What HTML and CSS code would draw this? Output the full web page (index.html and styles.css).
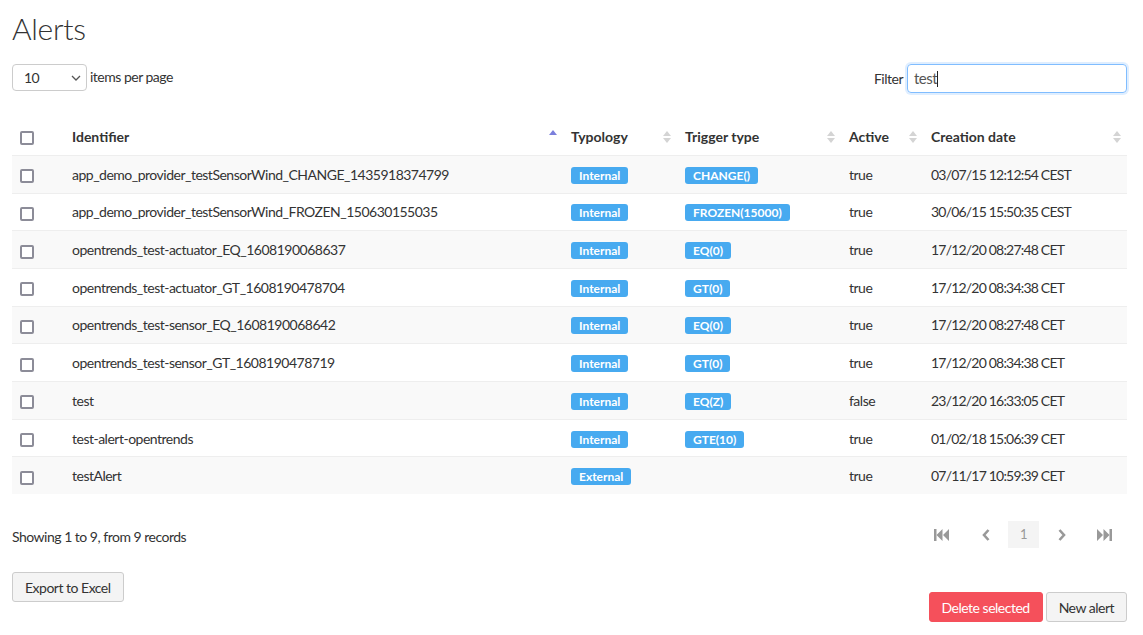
FILE: index.html
```html
<!DOCTYPE html>
<html lang="en">
<head>
    <meta charset="UTF-8">
    <meta name="viewport" content="width=device-width, initial-scale=1.0">
    <title>Alerts</title>
    <link rel="stylesheet" href="styles.css">
</head>
<body>
    <div class="container">
        <h1>Alerts</h1>

        <div class="toolbar">
            <div class="page-size">
                <div class="select">
                    <span>10</span>
                    <svg class="chevron" width="10" height="6" viewBox="0 0 10 6"><path d="M1 1l4 4 4-4" fill="none" stroke="#555" stroke-width="1.3"/></svg>
                </div>
                <label>items per page</label>
            </div>
            <div class="filter">
                <label for="filter">Filter</label>
                <div class="filter-input">test<span class="caret"></span></div>
            </div>
        </div>

        <table class="grid">
            <colgroup>
                <col style="width:52px">
                <col style="width:499px">
                <col style="width:114px">
                <col style="width:164px">
                <col style="width:82px">
                <col>
            </colgroup>
            <thead>
                <tr>
                    <th><input type="checkbox"></th>
                    <th class="sortable sort-asc">Identifier<span class="sort"></span></th>
                    <th class="sortable">Typology<span class="sort"></span></th>
                    <th class="sortable">Trigger type<span class="sort"></span></th>
                    <th class="sortable">Active<span class="sort"></span></th>
                    <th class="sortable">Creation date<span class="sort"></span></th>
                </tr>
            </thead>
            <tbody>
                <tr>
                    <td><input type="checkbox"></td>
                    <td>app_demo_provider_testSensorWind_CHANGE_1435918374799</td>
                    <td><span class="badge">Internal</span></td>
                    <td><span class="badge">CHANGE()</span></td>
                    <td>true</td>
                    <td class="date">03/07/15 12:12:54 CEST</td>
                </tr>
                <tr>
                    <td><input type="checkbox"></td>
                    <td>app_demo_provider_testSensorWind_FROZEN_150630155035</td>
                    <td><span class="badge">Internal</span></td>
                    <td><span class="badge">FROZEN(15000)</span></td>
                    <td>true</td>
                    <td class="date">30/06/15 15:50:35 CEST</td>
                </tr>
                <tr>
                    <td><input type="checkbox"></td>
                    <td>opentrends_test-actuator_EQ_1608190068637</td>
                    <td><span class="badge">Internal</span></td>
                    <td><span class="badge">EQ(0)</span></td>
                    <td>true</td>
                    <td class="date">17/12/20 08:27:48 CET</td>
                </tr>
                <tr>
                    <td><input type="checkbox"></td>
                    <td>opentrends_test-actuator_GT_1608190478704</td>
                    <td><span class="badge">Internal</span></td>
                    <td><span class="badge">GT(0)</span></td>
                    <td>true</td>
                    <td class="date">17/12/20 08:34:38 CET</td>
                </tr>
                <tr>
                    <td><input type="checkbox"></td>
                    <td>opentrends_test-sensor_EQ_1608190068642</td>
                    <td><span class="badge">Internal</span></td>
                    <td><span class="badge">EQ(0)</span></td>
                    <td>true</td>
                    <td class="date">17/12/20 08:27:48 CET</td>
                </tr>
                <tr>
                    <td><input type="checkbox"></td>
                    <td>opentrends_test-sensor_GT_1608190478719</td>
                    <td><span class="badge">Internal</span></td>
                    <td><span class="badge">GT(0)</span></td>
                    <td>true</td>
                    <td class="date">17/12/20 08:34:38 CET</td>
                </tr>
                <tr>
                    <td><input type="checkbox"></td>
                    <td>test</td>
                    <td><span class="badge">Internal</span></td>
                    <td><span class="badge">EQ(Z)</span></td>
                    <td>false</td>
                    <td class="date">23/12/20 16:33:05 CET</td>
                </tr>
                <tr>
                    <td><input type="checkbox"></td>
                    <td>test-alert-opentrends</td>
                    <td><span class="badge">Internal</span></td>
                    <td><span class="badge">GTE(10)</span></td>
                    <td>true</td>
                    <td class="date">01/02/18 15:06:39 CET</td>
                </tr>
                <tr>
                    <td><input type="checkbox"></td>
                    <td>testAlert</td>
                    <td><span class="badge">External</span></td>
                    <td></td>
                    <td>true</td>
                    <td class="date">07/11/17 10:59:39 CET</td>
                </tr>
            </tbody>
        </table>

        <div class="footer">
            <span class="summary">Showing 1 to 9, from 9 records</span>
            <ul class="pager">
                <li class="first"><svg width="15" height="12" viewBox="0 0 15 12"><rect x="0" y="0" width="2.5" height="12" fill="#999"/><path d="M8.5 0v12L2.5 6z M15 0v12L9 6z" fill="#999"/></svg></li>
                <li><svg width="8" height="12" viewBox="0 0 8 12"><path d="M6.5 1L2 6l4.5 5" fill="none" stroke="#999" stroke-width="2.6"/></svg></li>
                <li class="current">1</li>
                <li><svg width="8" height="12" viewBox="0 0 8 12"><path d="M1.5 1L6 6l-4.5 5" fill="none" stroke="#999" stroke-width="2.6"/></svg></li>
                <li class="last"><svg width="15" height="12" viewBox="0 0 15 12"><path d="M0 0v12L6 6z M6.5 0v12L12.5 6z" fill="#999"/><rect x="12.5" y="0" width="2.5" height="12" fill="#999"/></svg></li>
            </ul>
        </div>

        <div class="actions">
            <button class="btn">Export to Excel</button>
            <div class="actions-right">
                <button class="btn btn-danger">Delete selected</button>
                <button class="btn">New alert</button>
            </div>
        </div>
    </div>
</body>
</html>
```

FILE: styles.css
```css
:root {
    --text-color: #333;
    --border-color: #ccc;
    --stripe-color: #f9f9f9;
    --badge-color: #47aaf0;
    --danger-color: #f5505b;
}

* {
    margin: 0;
    padding: 0;
    box-sizing: border-box;
}

body {
    font-family: 'Lato', 'Noto Sans', sans-serif;
    font-size: 14px;
    line-height: 1.5;
    letter-spacing: -0.5px;
    color: var(--text-color);
    background: #fff;
}

.container {
    padding: 9px 16px 0 12px;
}

h1 {
    font-size: 30px;
    font-weight: 300;
    line-height: 38px;
    letter-spacing: -0.3px;
    margin-bottom: 17px;
}

.toolbar {
    display: flex;
    justify-content: space-between;
    align-items: flex-start;
    margin-bottom: 25px;
}

.page-size {
    display: flex;
    align-items: center;
    gap: 3px;
}

.page-size label {
    margin-top: -2px;
}

.select {
    width: 75px;
    height: 27px;
    border: 1px solid var(--border-color);
    border-radius: 4px;
    display: flex;
    align-items: center;
    justify-content: space-between;
    padding: 0 5px 0 11px;
}

.filter {
    display: flex;
    align-items: center;
    gap: 4px;
}

.filter-input {
    width: 220px;
    height: 29px;
    border: 1px solid #80bdff;
    border-radius: 4px;
    box-shadow: 0 0 0 2px rgba(128, 189, 255, 0.25);
    padding: 2px 6px;
    font-size: 15px;
    color: #555;
}

.caret {
    display: inline-block;
    width: 1px;
    height: 16px;
    background: #222;
    vertical-align: -3px;
}

.grid {
    width: 100%;
    border-collapse: collapse;
    table-layout: fixed;
}

.grid th,
.grid td {
    padding: 7.85px 8px;
    text-align: left;
    vertical-align: middle;
    white-space: nowrap;
}

.grid th {
    font-weight: 700;
    letter-spacing: 0;
    position: relative;
    padding-top: 8px;
}

.grid td {
    border-top: 1px solid #eee;
}

.grid td.date {
    letter-spacing: -0.8px;
}

.grid tbody tr:nth-child(odd) {
    background: var(--stripe-color);
}

input[type="checkbox"] {
    appearance: none;
    width: 14px;
    height: 14px;
    margin: 0;
    border: 2px solid #8c8c98;
    border-radius: 2px;
    background: #fff;
    vertical-align: middle;
}

.sort {
    position: absolute;
    right: 5px;
    top: 50%;
    width: 9px;
    height: 12px;
    margin-top: -5px;
}

.sort::before,
.sort::after {
    content: "";
    position: absolute;
    left: 0;
    border-left: 4.5px solid transparent;
    border-right: 4.5px solid transparent;
}

.sort::before {
    top: 0;
    border-bottom: 5px solid #d4d4d4;
}

.sort::after {
    bottom: 0;
    border-top: 5px solid #d4d4d4;
}

.sort-asc .sort {
    margin-top: -6px;
}

.sort-asc .sort::before {
    border-bottom-color: #7b7fdc;
}

.sort-asc .sort::after {
    display: none;
}

.badge {
    display: inline-block;
    background: var(--badge-color);
    color: #fff;
    font-size: 12px;
    font-weight: 700;
    letter-spacing: 0;
    line-height: 17px;
    padding: 0 8px;
    border-radius: 3px;
}

.footer {
    display: flex;
    justify-content: space-between;
    align-items: flex-start;
    margin-top: 27px;
}

.summary {
    padding-top: 5px;
}

.pager {
    list-style: none;
    display: flex;
    align-items: center;
    gap: 7px;
    margin-right: 7px;
}

.pager li {
    height: 27px;
    width: 31px;
    display: flex;
    align-items: center;
    justify-content: center;
    color: #999;
    font-size: 13px;
}

.pager li.first {
    margin-right: 6px;
}

.pager li.last {
    margin-left: 5px;
}

.pager li.current {
    background: #f4f4f4;
}

.actions {
    display: flex;
    justify-content: space-between;
    align-items: flex-start;
    margin-top: 24px;
}

.actions-right {
    display: flex;
    gap: 3px;
    margin-top: 20px;
}

.btn {
    font-family: inherit;
    font-size: 14px;
    letter-spacing: -0.5px;
    color: var(--text-color);
    background: #f4f4f4;
    border: 1px solid var(--border-color);
    border-radius: 3px;
    padding: 0 12px;
    height: 30px;
    cursor: pointer;
}

.btn-danger {
    background: var(--danger-color);
    border-color: var(--danger-color);
    color: #fff;
}
```
